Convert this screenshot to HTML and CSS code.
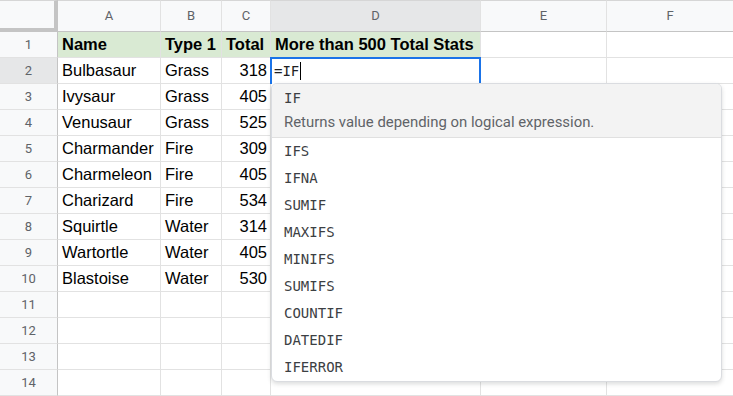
FILE: index.html
```html
<!DOCTYPE html>
<html lang="en">
<head>
    <meta charset="utf-8">
    <title>Pokemon Stats</title>
    <link rel="stylesheet" href="styles.css">
</head>
<body>
    <div class="sheet">
        <div class="cell corner"></div>
        <div class="cell col-head">A</div>
        <div class="cell col-head">B</div>
        <div class="cell col-head">C</div>
        <div class="cell col-head active">D</div>
        <div class="cell col-head">E</div>
        <div class="cell col-head">F</div>

        <div class="cell row-head">1</div>
        <div class="cell title">Name</div>
        <div class="cell title">Type 1</div>
        <div class="cell title">Total</div>
        <div class="cell title">More than 500 Total Stats</div>
        <div class="cell"></div>
        <div class="cell"></div>

        <div class="cell row-head active">2</div>
        <div class="cell">Bulbasaur</div>
        <div class="cell">Grass</div>
        <div class="cell num">318</div>
        <div class="cell editing">
            <div class="editor">=IF<span class="caret"></span></div>
            <div class="suggest">
                <div class="suggest-item selected">
                    <div class="fn">IF</div>
                    <div class="desc">Returns value depending on logical expression.</div>
                </div>
                <div class="suggest-item">IFS</div>
                <div class="suggest-item">IFNA</div>
                <div class="suggest-item">SUMIF</div>
                <div class="suggest-item">MAXIFS</div>
                <div class="suggest-item">MINIFS</div>
                <div class="suggest-item">SUMIFS</div>
                <div class="suggest-item">COUNTIF</div>
                <div class="suggest-item">DATEDIF</div>
                <div class="suggest-item">IFERROR</div>
            </div>
        </div>
        <div class="cell"></div>
        <div class="cell"></div>

        <div class="cell row-head">3</div>
        <div class="cell">Ivysaur</div>
        <div class="cell">Grass</div>
        <div class="cell num">405</div>
        <div class="cell"></div><div class="cell"></div><div class="cell"></div>

        <div class="cell row-head">4</div>
        <div class="cell">Venusaur</div>
        <div class="cell">Grass</div>
        <div class="cell num">525</div>
        <div class="cell"></div><div class="cell"></div><div class="cell"></div>

        <div class="cell row-head">5</div>
        <div class="cell">Charmander</div>
        <div class="cell">Fire</div>
        <div class="cell num">309</div>
        <div class="cell"></div><div class="cell"></div><div class="cell"></div>

        <div class="cell row-head">6</div>
        <div class="cell">Charmeleon</div>
        <div class="cell">Fire</div>
        <div class="cell num">405</div>
        <div class="cell"></div><div class="cell"></div><div class="cell"></div>

        <div class="cell row-head">7</div>
        <div class="cell">Charizard</div>
        <div class="cell">Fire</div>
        <div class="cell num">534</div>
        <div class="cell"></div><div class="cell"></div><div class="cell"></div>

        <div class="cell row-head">8</div>
        <div class="cell">Squirtle</div>
        <div class="cell">Water</div>
        <div class="cell num">314</div>
        <div class="cell"></div><div class="cell"></div><div class="cell"></div>

        <div class="cell row-head">9</div>
        <div class="cell">Wartortle</div>
        <div class="cell">Water</div>
        <div class="cell num">405</div>
        <div class="cell"></div><div class="cell"></div><div class="cell"></div>

        <div class="cell row-head">10</div>
        <div class="cell">Blastoise</div>
        <div class="cell">Water</div>
        <div class="cell num">530</div>
        <div class="cell"></div><div class="cell"></div><div class="cell"></div>

        <div class="cell row-head">11</div>
        <div class="cell"></div><div class="cell"></div><div class="cell"></div>
        <div class="cell"></div><div class="cell"></div><div class="cell"></div>

        <div class="cell row-head">12</div>
        <div class="cell"></div><div class="cell"></div><div class="cell"></div>
        <div class="cell"></div><div class="cell"></div><div class="cell"></div>

        <div class="cell row-head">13</div>
        <div class="cell"></div><div class="cell"></div><div class="cell"></div>
        <div class="cell"></div><div class="cell"></div><div class="cell"></div>

        <div class="cell row-head">14</div>
        <div class="cell"></div><div class="cell"></div><div class="cell"></div>
        <div class="cell"></div><div class="cell"></div><div class="cell"></div>
    </div>
</body>
</html>
```

FILE: styles.css
```css
body {
    margin: 0;
    padding: 0;
    background: #ffffff;
    font-family: "Liberation Sans", Arial, sans-serif;
    overflow: hidden;
}
.sheet {
    display: grid;
    grid-template-columns: 58px 103px 61px 49px 210px 126px 127px;
    grid-template-rows: 32px;
    grid-auto-rows: 26px;
}
.cell {
    box-sizing: border-box;
    border-right: 1px solid #e2e2e2;
    border-bottom: 1px solid #e2e2e2;
    font-size: 16.5px;
    line-height: 25px;
    padding: 0 4px;
    color: #000000;
    white-space: nowrap;
}
.num {
    text-align: right;
    padding-right: 3px;
}
.title {
    background-color: #d9ead3;
    font-weight: bold;
}
.corner {
    background-color: #f8f9fa;
    border-right: 4px solid #c4c4c4;
    border-bottom: 4px solid #c4c4c4;
    border-top: 1px solid #d6d6d6;
}
.col-head {
    background-color: #f8f9fa;
    border-top: 1px solid #d6d6d6;
    border-bottom-color: #c4c4c4;
    font-family: Roboto, "Liberation Sans", sans-serif;
    font-size: 13px;
    line-height: 30px;
    color: #5f6368;
    text-align: center;
}
.row-head {
    background-color: #f8f9fa;
    border-right-color: #c4c4c4;
    font-family: Roboto, "Liberation Sans", sans-serif;
    font-size: 13px;
    color: #5f6368;
    text-align: center;
}
.active {
    background-color: #e6e7e8;
}
.editing {
    position: relative;
    z-index: 2;
    overflow: visible;
}
.editor {
    position: absolute;
    top: -1px;
    left: -1px;
    right: -1px;
    height: 27px;
    box-sizing: border-box;
    border: 2px solid #1a73e8;
    border-bottom: none;
    padding: 0 2px;
    background: #ffffff;
    font-family: "DejaVu Sans Mono", monospace;
    font-size: 14px;
    line-height: 24px;
    color: #202124;
}
.caret {
    display: inline-block;
    width: 1px;
    height: 18px;
    margin-left: 1px;
    vertical-align: -4px;
    background-color: #000000;
}
.suggest {
    position: absolute;
    top: 25px;
    left: 0;
    width: 451px;
    box-sizing: border-box;
    background: #ffffff;
    border: 1px solid #dadce0;
    border-radius: 6px;
    box-shadow: 0 2px 4px rgba(60, 64, 67, 0.18);
    overflow: hidden;
}
.suggest-item {
    height: 27px;
    padding: 0 12px;
    font-family: "DejaVu Sans Mono", monospace;
    font-size: 14px;
    line-height: 27px;
    color: #3c4043;
}
.suggest-item.selected {
    box-sizing: border-box;
    height: 54px;
    padding-top: 2px;
    background-color: #f3f3f3;
    border-bottom: 1px solid #e0e0e0;
}
.selected .fn {
    line-height: 24px;
}
.selected .desc {
    font-family: Roboto, "Liberation Sans", sans-serif;
    font-size: 14.9px;
    line-height: 24px;
    color: #5f6368;
}
```
